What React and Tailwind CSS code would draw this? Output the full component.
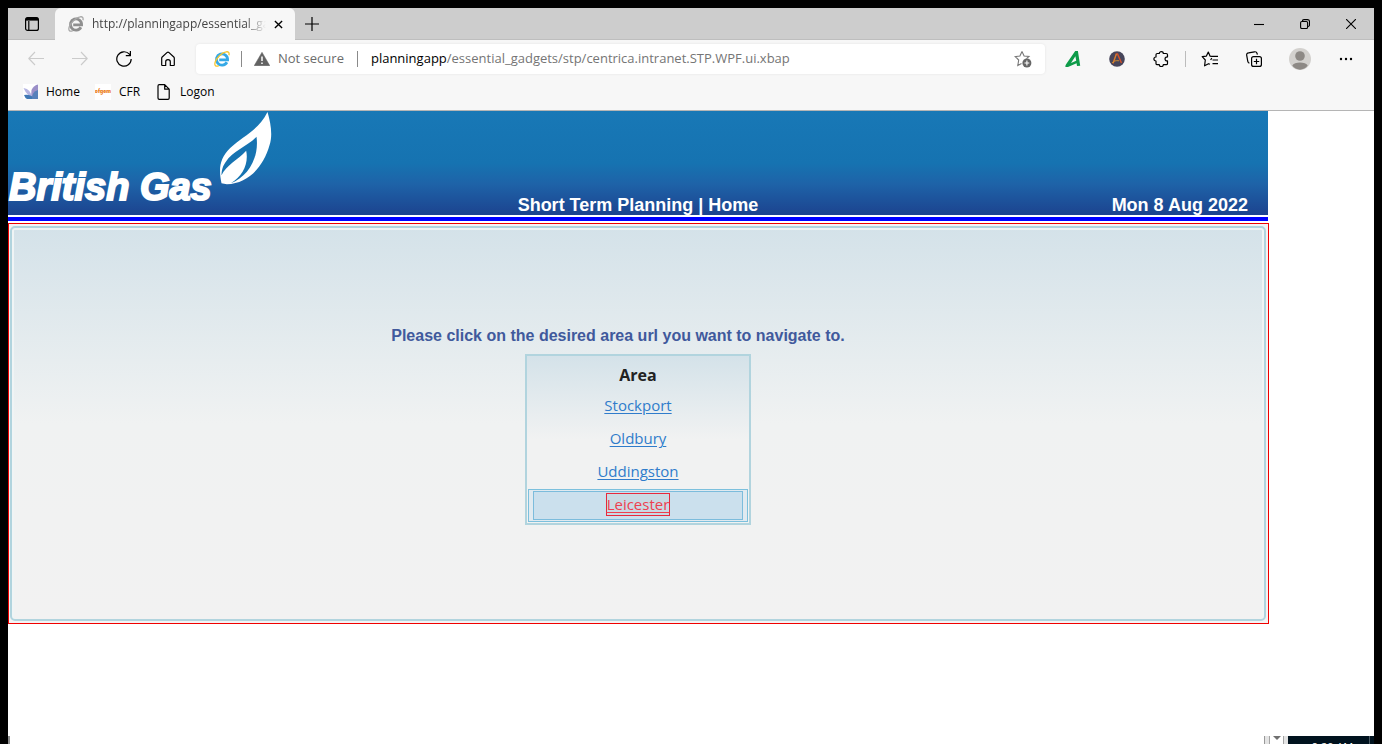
import React from "react";

function Ie({ mono }) {
  return (
    <svg viewBox="0 0 16 16" className="size-4 shrink-0" fill="none" aria-hidden="true">
      <path d="M12.9 11.2A5.6 5.6 0 1 1 13.6 8.8H5.2" stroke={mono ? "#8f8f8f" : "#35a9e6"} strokeWidth="2.8" />
      <path d="M14.9 4.2C15.6 1.8 14.4.3 12 .9C7.500 1.800 2.600 6.800 1.100 11.300C.2 14.700 1.800 16 4.800 14.600" stroke={mono ? "#a8a8a8" : "#f6c62f"} strokeWidth="1.3" />
    </svg>
  );
}

function Svg({ size = "size-4", view = "0 0 16 16", children, ...rest }) {
  return (
    <svg viewBox={view} className={`${size} shrink-0`} fill="none" stroke="currentColor" strokeWidth="1.1" strokeLinejoin="round" aria-hidden="true" {...rest}>
      {children}
    </svg>
  );
}

function ToolButton({ label, className = "w-11", children }) {
  return (
    <button type="button" aria-label={label} className={`flex h-8 shrink-0 items-center justify-center ${className}`}>
      {children}
    </button>
  );
}

function TabStrip() {
  return (
    <div className="flex h-8 bg-[#cdcdcd]">
      <ToolButton label="Tab actions" className="w-[47px] border-b border-[#bebebe]">
        <Svg strokeWidth="1.2">
          <rect x="1.600" y="1.600" width="12.800" height="12.800" rx="2" />
          <path d="M2 3.200H14" strokeWidth="2.800" />
          <path d="M4.800 5V14" />
        </Svg>
      </ToolButton>
      <div className="flex w-60 shrink-0 items-center rounded-t-md bg-[#f7f7f7] pl-[13px]">
        <Ie mono />
        <span className="ml-2 w-[174px] overflow-hidden whitespace-nowrap text-[12px] text-[#444] [mask-image:linear-gradient(to_right,black_88%,transparent)]">
          http://planningapp/essential_gadgets
        </span>
        <ToolButton label="Close tab" className="w-6">
          <Svg size="size-[9px]" view="0 0 10 10" strokeWidth="1.500"><path d="M1 1L9 9M9 1L1 9" /></Svg>
        </ToolButton>
      </div>
      <div className="flex flex-1 justify-between border-b border-[#bebebe]">
        <ToolButton label="New tab" className="w-[34px]">
          <Svg strokeWidth="1.200"><path d="M8 1V15M1 8H15" /></Svg>
        </ToolButton>
        <div className="flex">
          <ToolButton label="Minimize" className="w-[46px]"><Svg size="size-2.5" view="0 0 10 10"><path d="M0 5.500H10" /></Svg></ToolButton>
          <ToolButton label="Restore" className="w-[46px]">
            <Svg size="size-2.5" view="0 0 10 10"><rect x=".6" y="2.500" width="7" height="7" rx="1.300" /><path d="M2.500 2.300V2C2.500 1.200 3 .6 4 .6H7.500C8.700.6 9.500 1.400 9.500 2.600V6C9.500 6.900 9 7.500 8 7.500" /></Svg>
          </ToolButton>
          <ToolButton label="Close window" className="w-[46px]"><Svg size="size-2.5" view="0 0 10 10"><path d="M0 0L10 10M10 0L0 10" /></Svg></ToolButton>
        </div>
      </div>
    </div>
  );
}

function Toolbar() {
  return (
    <div className="flex items-center pl-1.5 pr-1.5 pt-[3px]">
      <ToolButton label="Back"><Svg className="size-4 text-[#cbcbcb]"><path d="M16 7.500H.8M7 1L.8 7.500L7 14" /></Svg></ToolButton>
      <ToolButton label="Forward"><Svg className="size-4 text-[#cbcbcb]"><path d="M0 7.500H15.200M9 1L15.200 7.500L9 14" /></Svg></ToolButton>
      <ToolButton label="Refresh"><Svg strokeWidth="1.200"><path d="M15.200 8A7.200 7.200 0 1 1 13.400 3.200L14.200 4.400M14.400 0V4.700H9.800" /></Svg></ToolButton>
      <ToolButton label="Home page"><Svg strokeWidth="1.200"><path d="M1.700 7.200Q1.700 6.500 2.200 6L7.200 1.400Q8 .8 8.800 1.400L13.800 6Q14.300 6.500 14.300 7.200V14Q14.300 14.500 13.800 14.500H10.300V10.800C10.300 8 5.700 8 5.700 10.800V14.500H2.200Q1.700 14.500 1.700 14Z" /></Svg></ToolButton>
      <div className="ml-1.5 mr-1.5 flex h-[30px] min-w-0 flex-1 items-center rounded bg-white pl-[18px] pr-[13px] shadow-[0_0_3px_rgba(0,0,0,0.08)]">
        <Ie />
        <span className="ml-[11px] h-4 w-px bg-[#8a8a8a]" />
        <svg viewBox="0 0 16 14" className="ml-3 h-3.5 w-4 shrink-0" aria-hidden="true">
          <path d="M8 .3L15.800 13.700H.2Z" fill="#636363" stroke="#636363" strokeLinejoin="round" strokeWidth=".5" />
          <path d="M8 4.500V9M8 10.500V12" stroke="white" strokeWidth="1.500" />
        </svg>
        <span className="ml-2 shrink-0 whitespace-nowrap text-[13px] text-[#6b6b6b]">Not secure</span>
        <span className="ml-[13px] h-4 w-px bg-[#8a8a8a]" />
        <p className="ml-[13px] flex-1 truncate text-[13px] text-[#757575]">
          <span className="text-black">planningapp</span>/essential_gadgets/stp/centrica.intranet.STP.WPF.ui.xbap
        </p>
        <button type="button" aria-label="Add to favorites">
          <svg viewBox="0 0 18 18" className="size-[18px]" fill="none" stroke="#777" strokeWidth="1.100" aria-hidden="true">
            <path d="M8 1.500L10.100 6L15 6.500L12.500 8.700M8 1.500L5.900 6L1.200 6.600L4.700 10L3.800 15.500L7.500 13.500" />
            <circle cx="12.900" cy="13" r="4.500" fill="#666" stroke="none" />
            <path d="M10.500 13H15.300M12.900 10.600V15.400" stroke="white" />
          </svg>
        </button>
      </div>
      <ToolButton label="Green A extension">
        <svg viewBox="0 0 16 16" className="size-4" aria-hidden="true"><path fillRule="evenodd" fill="#0d9b49" d="M10.200 0H12.900L15.200 14.800L12 15.100L11.600 12.300L3 15.900H.4Q.2 14.600 1.100 13.200ZM10.400 5.300L6 12L11.200 9.800Z" /></svg>
      </ToolButton>
      <ToolButton label="Round A extension">
        <svg viewBox="0 0 16 16" className="size-4" fill="none" aria-hidden="true"><circle cx="8" cy="8" r="7.800" fill="#46455a" /><path d="M4 12.500L7.300 3H8.500L12.500 12" stroke="#d0502a" strokeWidth="1.500" /><path d="M3 12C4 10 7 9.300 10 9.800M4.200 12L7.400 3" stroke="#c98a34" strokeWidth="1" /></svg>
      </ToolButton>
      <ToolButton label="Extensions">
        <Svg strokeWidth="1.200"><path d="M4.300 2.500H6.300C6.300 0 10.300 0 10.300 2.500H13.200Q14.500 2.500 14.500 3.800V6C11.200 5.500 11.200 10.500 14.500 9.900V12.400Q14.500 13.700 13.200 13.700H10.300C10.300 16.200 6.300 16.200 6.300 13.700H4.300Q3 13.700 3 12.400V10C.2 10 .2 6 3 6V3.800Q3 2.500 4.300 2.500Z" /></Svg>
      </ToolButton>
      <span className="mx-0.5 h-4 w-px shrink-0 bg-[#bcbcbc]" />
      <ToolButton label="Favorites">
        <Svg size="size-[18px]" view="0 0 18 16" strokeWidth="1.200"><path d="M10.500 5.300H17M11.500 9H17M11.500 12.700H17M10.500 5.300L9 5.100L7.300 1L5.400 5.100L1.200 5.700L4.300 9L3.600 14.800L7.500 12.700L9 13.300M10.800 7.200L9.600 9" /></Svg>
      </ToolButton>
      <ToolButton label="Collections">
        <Svg strokeWidth="1.200"><rect x="5.600" y="5.600" width="9.800" height="9.800" rx="2" /><path d="M10.500 7.800V13.200M7.800 10.500H13.200M3.400 12.200C2.500 12 2 11.300 1.800 10.300L.7 4.300C.5 3 1.200 2.100 2.500 1.900L8.500.8C9.900.6 10.800 1.300 11.100 2.500L11.400 3.700" /></Svg>
      </ToolButton>
      <ToolButton label="Profile" className="w-12">
        <svg viewBox="0 0 22 22" className="size-[22px]" aria-hidden="true"><circle cx="11" cy="11" r="11" fill="#d3d1ce" /><circle cx="11" cy="8" r="4.800" fill="#8d8985" /><path d="M3.300 17.500C5 13.500 17 13.500 18.700 17.500C15.500 23 6.500 23 3.300 17.500Z" fill="#8d8985" /></svg>
      </ToolButton>
      <ToolButton label="Settings and more">
        <svg viewBox="0 0 14 4" className="h-1 w-3.5" aria-hidden="true"><circle cx="2" cy="2" r="1.200" /><circle cx="7" cy="2" r="1.200" /><circle cx="12" cy="2" r="1.200" /></svg>
      </ToolButton>
    </div>
  );
}

function Bookmarks() {
  return (
    <nav aria-label="Bookmarks" className="flex h-9 items-center border-b border-[#b5b5b5] pb-0.5 pl-[15px] text-[12px] text-black">
      <a href="#home" className="flex items-center gap-2">
        <svg viewBox="0 0 15 15" className="size-[15px]" aria-hidden="true">
          <rect width="15" height="15" fill="white" />
          <path d="M8.500 6Q11 1 15 .5V15H8Z" fill="#9b8fc8" /><path d="M.5 4Q8 5 9 14L6 12Q2 8 .5 4Z" fill="#b6b5e2" /><path d="M1 11Q7 10 11 14L10 15H4Q2 14 1 11Z" fill="#3f78b5" /><path d="M9 14Q9 8 15 6V15H9Z" fill="#5680ba" />
        </svg>
        Home
      </a>
      <a href="#cfr" className="ml-[15px] flex items-center gap-2">
        <span className="flex size-4 items-center justify-center overflow-hidden bg-white font-[Inter] text-[5px] font-black text-[#ec7d17]">ofgem</span>
        CFR
      </a>
      <a href="#logon" className="ml-4 flex items-center gap-2">
        <Svg strokeWidth="1.200"><path d="M3.300.7H8.700L13.200 5.200V14Q13.200 15.300 12 15.300H3.300Q2 15.300 2 14V2Q2 .7 3.300.7ZM8.700.7V5.200H13.200" /></Svg>
        Logon
      </a>
    </nav>
  );
}

function Masthead() {
  return (
    <header className="mr-px border-b-4 border-[#0000ff]">
      <div className="grid h-[104px] grid-cols-3 items-end bg-[linear-gradient(to_bottom,#1878b6_0%,#1673b1_50%,#1e63a8_70%,#1c438f_100%)] text-lg font-bold leading-5 text-white">
        <div className="flex items-end self-stretch pl-px">
          <span className="mb-2.5 whitespace-nowrap text-[38px] font-bold italic leading-9 [-webkit-text-stroke:2px_white]">British Gas</span>
          <svg viewBox="657 17 158 222" className="ml-[7px] h-[74px] w-[53px] shrink-0 self-start" aria-hidden="true">
            <path d="M802 20C812 55 818 90 808 120C790 184 745 234 680 237L664 234C655 190 658 160 690 128C730 90 775 75 802 20Z" fill="white" />
            <path d="M769 94C740 125 700 133 675 172C666 185 664 200 664 210C678 178 714 164 738 136C746 175 728 212 692 234C742 216 778 158 769 94Z" fill="#1673b1" />
          </svg>
        </div>
        <h1 className="whitespace-nowrap text-center">Short Term Planning | Home</h1>
        <p className="pr-5 text-right">Mon 8 Aug 2022</p>
      </div>
      <div className="h-0.5 bg-white" />
    </header>
  );
}

function AreaTable() {
  return (
    <table className="w-[226px] border-separate border-spacing-0 border-2 border-[#b1d4de] bg-[linear-gradient(to_bottom,#d4e2e9,#f1f2f2_50%)] p-px text-center font-['Open_Sans',sans-serif] text-[15px]">
      <thead>
        <tr><th className="h-[33px] p-0 pt-0.5 text-[16px] font-bold text-[#222]">Area</th></tr>
      </thead>
      <tbody>
        {["Stockport", "Oldbury", "Uddingston"].map((name) => (
          <tr key={name}><td className="h-[33px] p-0 pb-0.5"><a href={`#${name}`} className="text-[#2f7ccb] underline underline-offset-2">{name}</a></td></tr>
        ))}
        <tr>
          <td className="border border-[#7cc0dd] bg-[#e0eaf0] px-1 py-px">
            <div className="flex justify-center border border-[#7cbcdc] bg-[#cbe0ed] pb-[3px] pt-px">
              <a href="#Leicester" className="border border-[#e8283c] bg-[#c9dae4] leading-[21px] text-[#ee4050] underline underline-offset-2">Leicester</a>
            </div>
          </td>
        </tr>
      </tbody>
    </table>
  );
}

export default function App() {
  return (
    <div className="flex h-screen min-h-[640px] flex-col overflow-hidden bg-black px-2 pt-2 font-['Open_Sans',sans-serif]">
      <div className="bg-[#f7f7f7]">
        <TabStrip />
        <Toolbar />
        <Bookmarks />
      </div>
      <main className="flex-1 bg-white pr-[105px] font-['Liberation_Sans',Arial,sans-serif]">
        <Masthead />
        <section className="mt-0.5 border border-[#f00000] bg-[#f3f3f3] p-px pb-0.5 pr-0.5 pt-0.5">
          <div className="flex flex-col items-center rounded-[5px] border-2 border-[#b1d4de] bg-[linear-gradient(to_bottom,#d4e2e9,#f0f2f2_50%,#f2f2f2)] pb-[94px] pt-[98px] shadow-[inset_0_2px_0_#f0f4f5,inset_2px_0_0_#f0f4f5,inset_-2px_0_0_#f0f4f5]">
            <p className="mb-2 pr-10 text-base font-bold leading-5 text-[#40599c]">Please click on the desired area url you want to navigate to.</p>
            <AreaTable />
          </div>
        </section>
      </main>
      <footer className="flex h-2 shrink-0 justify-between overflow-hidden bg-white">
        <span className="w-0.5 bg-[#8d8d8d]" />
        <div className="flex">
          <div className="flex w-6 justify-center border-l border-[#999] bg-[#e4e4e4]">
            <span className="flex w-[15px] justify-center border-x border-[#a5a5a5] bg-white"><svg viewBox="0 0 8 4" className="h-1 w-2" aria-hidden="true"><path d="M0 0H8L4 4Z" fill="#707070" /></svg></span>
          </div>
          <div className="flex w-[86px] justify-end bg-[#00121e]">
            <span className="flex w-[82px] justify-center border-r border-[#4a5a64] pl-2 pt-[3px] text-[11px] leading-4 text-white">9:20 AM</span>
            <span className="w-1" />
          </div>
        </div>
      </footer>
    </div>
  );
}
